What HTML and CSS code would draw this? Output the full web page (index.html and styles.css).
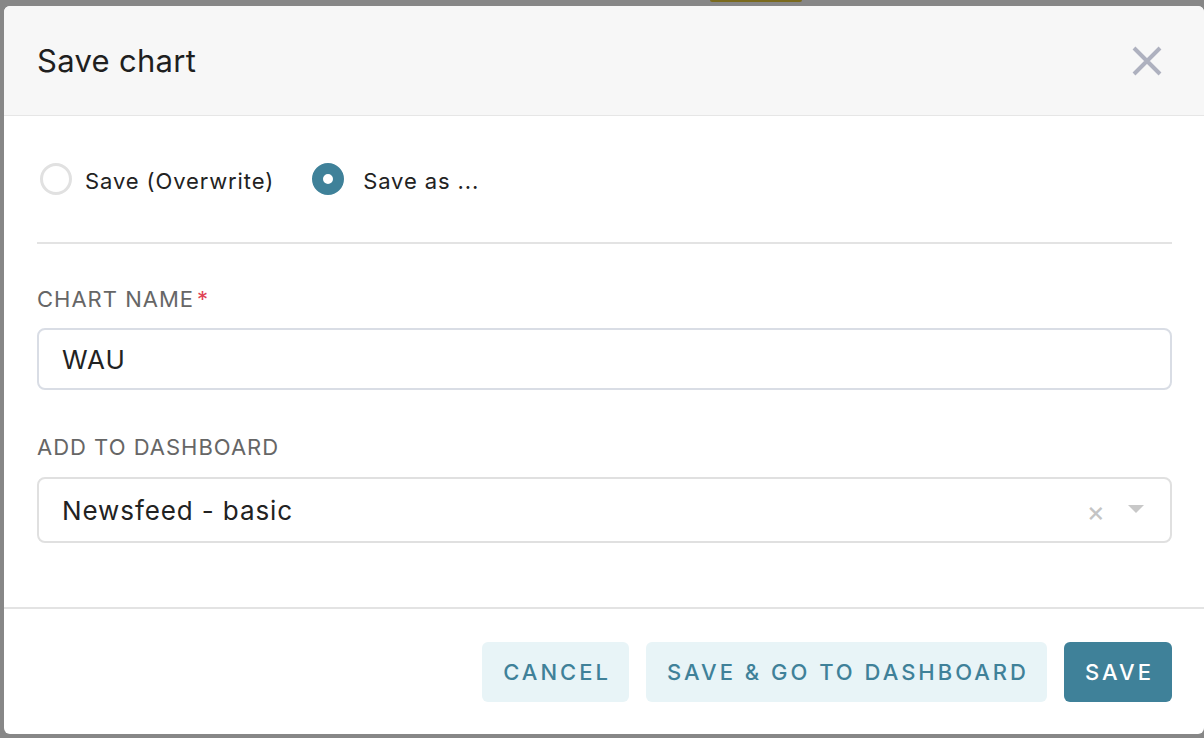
FILE: index.html
```html
<!DOCTYPE html>
<html>
<head>
<meta charset="utf-8">
<link rel="stylesheet" href="styles.css">
</head>
<body>
<div class="backdrop">
  <div class="under-tab"></div>
  <div class="modal">
    <div class="modal-header">
      <h1 class="title">Save chart</h1>
      <button class="close" aria-label="Close">
        <svg width="30" height="30" viewBox="0 0 30 30"><path d="M2 2 L28 28 M28 2 L2 28" stroke="#aeb1bf" stroke-width="4" stroke-linecap="butt"/></svg>
      </button>
    </div>
    <div class="modal-body">
      <div class="radios">
        <label class="radio"><span class="dot"></span><span class="rtext">Save (Overwrite)</span></label>
        <label class="radio checked"><span class="dot"></span><span class="rtext">Save as ...</span></label>
      </div>
      <div class="divider"></div>
      <div class="field-label">CHART NAME<span class="req">*</span></div>
      <div class="input">WAU</div>
      <div class="field-label second">ADD TO DASHBOARD</div>
      <div class="select">
        <span class="value">Newsfeed - basic</span>
        <span class="clear">×</span>
        <span class="caret"></span>
      </div>
    </div>
    <div class="modal-footer">
      <button class="btn light">CANCEL</button>
      <button class="btn light">SAVE &amp; GO TO DASHBOARD</button>
      <button class="btn primary">SAVE</button>
    </div>
  </div>
</div>
</body>
</html>
```

FILE: styles.css
```css
* { box-sizing: border-box; }
html, body { margin: 0; padding: 0; }
body {
  width: 1204px;
  height: 738px;
  background: #878787;
  font-family: Inter, "Noto Sans", "Liberation Sans", sans-serif;
  overflow: hidden;
}
.backdrop {
  position: relative;
  padding: 6px 0 0 4px;
  height: 738px;
}
.under-tab {
  position: absolute;
  left: 710px;
  top: 0;
  width: 92px;
  height: 2px;
  background: #7a6a1e;
  border-radius: 0 0 4px 4px;
}
.modal {
  width: 1200px;
  height: 728px;
  background: #fff;
  border-radius: 6px;
  display: flex;
  flex-direction: column;
  overflow: hidden;
}
.modal-header {
  height: 110px;
  flex: none;
  background: #f7f7f7;
  border-bottom: 1px solid #e6e6e6;
  display: flex;
  align-items: center;
  justify-content: space-between;
  padding: 0 42px 0 33px;
}
.title {
  margin: 0;
  font-size: 31px;
  font-weight: 400;
  color: #1f1f1f;
  letter-spacing: 0.3px;
}
.close {
  border: 0;
  background: none;
  padding: 0;
  width: 30px;
  height: 30px;
  display: flex;
}
.modal-body {
  flex: 1;
  padding: 46px 32px 0 33px;
}
.radios {
  display: flex;
  align-items: center;
  gap: 38px;
  height: 34px;
}
.radio {
  display: flex;
  align-items: center;
  gap: 13px;
  font-size: 22px;
  letter-spacing: 0.9px;
  color: #222;
}
.rtext { padding-top: 4px; }
.dot {
  width: 32px;
  height: 32px;
  border-radius: 50%;
  border: 3px solid #e1e1e1;
  background: #fff;
  margin-left: 3px;
  flex: none;
}
.radio.checked .dot {
  border: 11px solid #3f8199;
  background: #fff;
  margin-left: 0;
  margin-right: 6px;
}
.divider {
  height: 2px;
  background: #e3e3e3;
  margin-top: 46px;
}
.field-label {
  margin-top: 42px;
  font-size: 22px;
  line-height: 26px;
  color: #666;
  letter-spacing: 1px;
}
.field-label.second { margin-top: 44px; }
.req {
  color: #e04355;
  margin-left: 3px;
}
.input {
  margin-top: 16px;
  height: 62px;
  border: 2px solid #d9dde5;
  border-radius: 8px;
  display: flex;
  align-items: center;
  padding-left: 23px;
  font-size: 26px;
  letter-spacing: 0.9px;
  color: #222;
}
.select {
  margin-top: 17px;
  height: 66px;
  border: 2px solid #e0e0e0;
  border-radius: 8px;
  display: flex;
  align-items: center;
  padding: 0 26px 0 23px;
  font-size: 26px;
  letter-spacing: 0.9px;
  color: #222;
}
.value { flex: 1; }
.clear {
  color: #c4c4c4;
  font-size: 28px;
  margin-right: 22px;
  margin-top: 2px;
}
.caret {
  width: 0;
  height: 0;
  border-left: 8px solid transparent;
  border-right: 8px solid transparent;
  border-top: 8px solid #c8c8c8;
  margin-top: -2px;
}
.modal-footer {
  flex: none;
  border-top: 2px solid #e3e3e3;
  padding: 33px 32px 32px 0;
  display: flex;
  justify-content: flex-end;
  gap: 17px;
}
.btn {
  height: 60px;
  border: 0;
  border-radius: 6px;
  font-family: Inter, "Noto Sans", sans-serif;
  font-size: 22px;
  font-weight: 500;
  letter-spacing: 3px;
  padding: 0 18px 0 21px;
}
.btn.light {
  background: #e8f4f7;
  color: #3f8199;
}
.btn.primary {
  background: #3f8199;
  color: #fff;
}
```
